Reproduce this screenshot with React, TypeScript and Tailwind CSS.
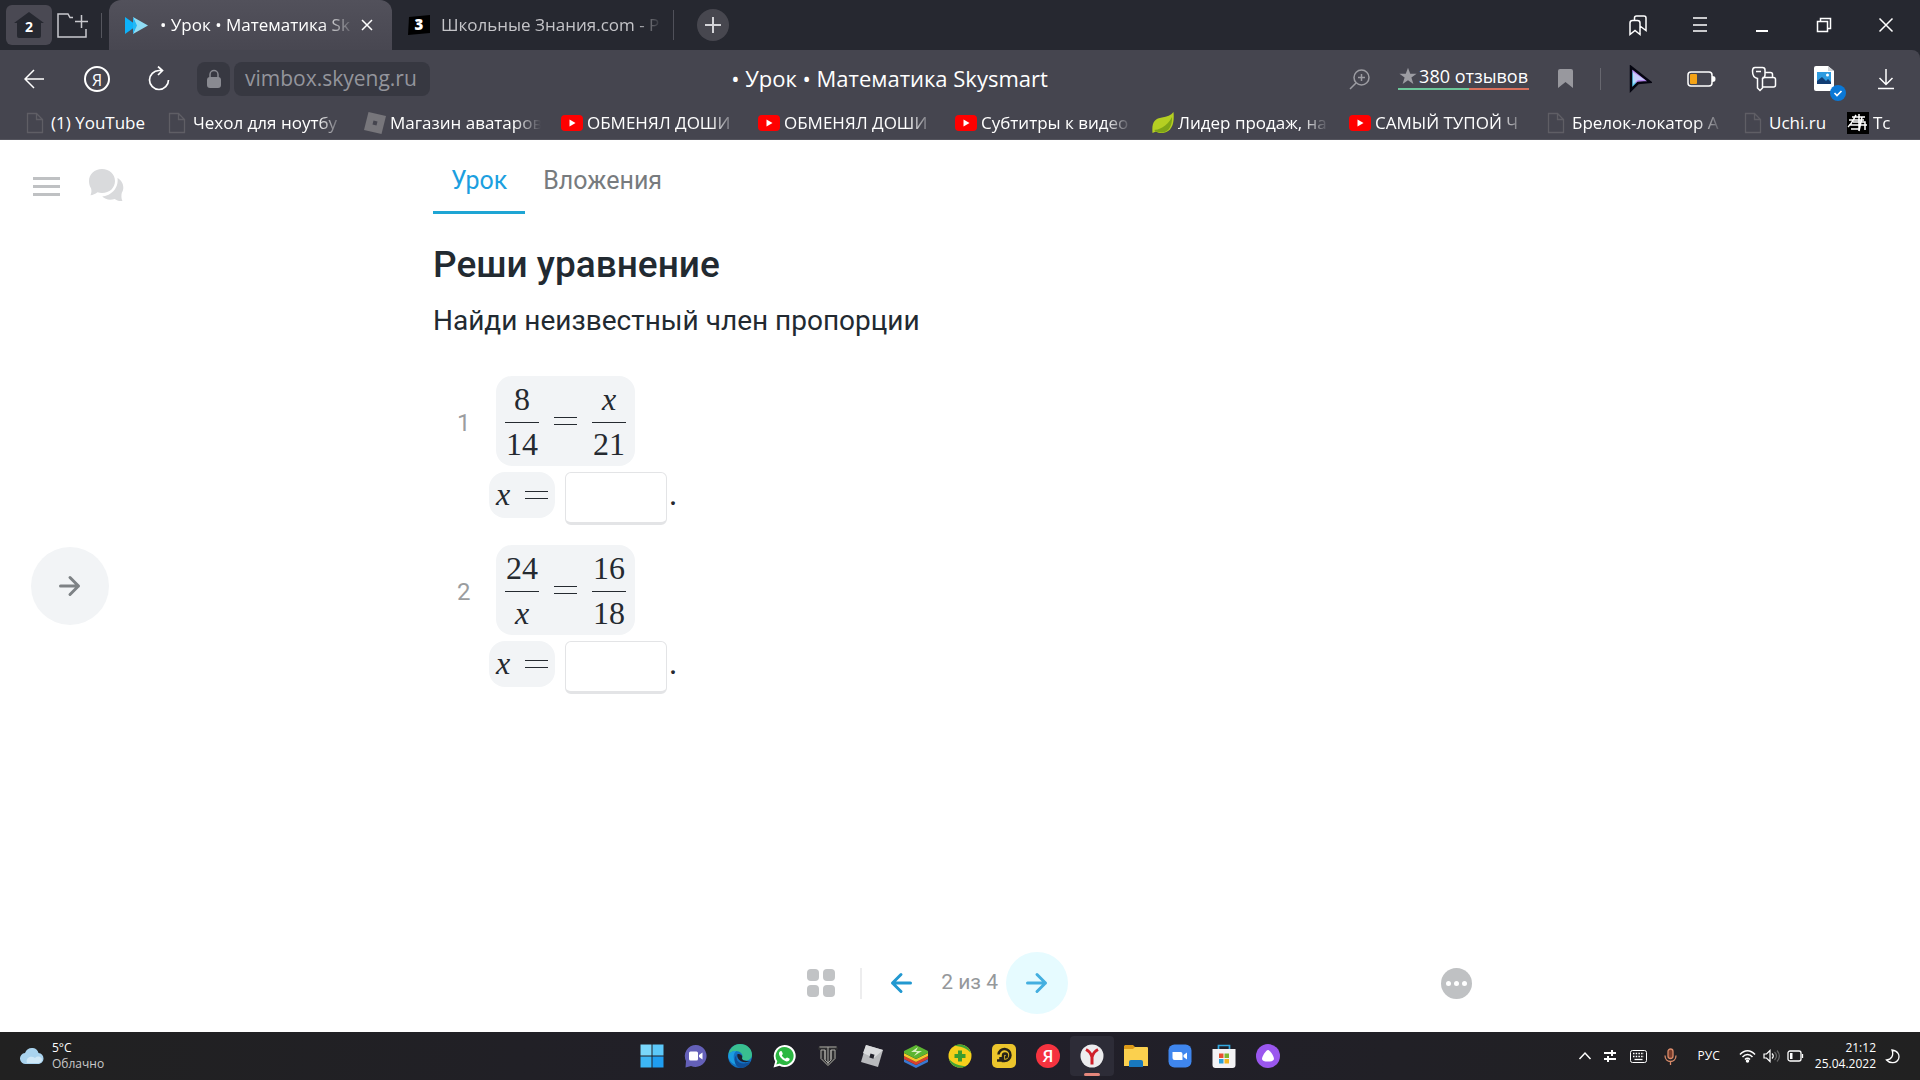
import { useState, type ReactNode } from "react";

type IconProps = { className?: string };

type Bookmark = {
  title: string;
  icon: "page" | "roblox" | "youtube" | "leaf" | "sketch";
  width: string;
};

type Term = { text: string; italic?: boolean };

type Equation = {
  id: number;
  left: [Term, Term];
  right: [Term, Term];
};

const bookmarks: Bookmark[] = [
  { title: "(1) YouTube", icon: "page", width: "w-[96px]" },
  { title: "Чехол для ноутбу", icon: "page", width: "w-[151px]" },
  { title: "Магазин аватаров", icon: "roblox", width: "w-[151px]" },
  { title: "ОБМЕНЯЛ ДОШИ", icon: "youtube", width: "w-[151px]" },
  { title: "ОБМЕНЯЛ ДОШИ", icon: "youtube", width: "w-[151px]" },
  { title: "Субтитры к видео", icon: "youtube", width: "w-[151px]" },
  { title: "Лидер продаж, на", icon: "leaf", width: "w-[151px]" },
  { title: "САМЫЙ ТУПОЙ Ч", icon: "youtube", width: "w-[151px]" },
  { title: "Брелок-локатор A", icon: "page", width: "w-[151px]" },
  { title: "Uchi.ru", icon: "page", width: "w-[58px]" },
  { title: "Tc", icon: "sketch", width: "w-[22px]" },
];

const equations: Equation[] = [
  {
    id: 1,
    left: [{ text: "8" }, { text: "14" }],
    right: [{ text: "x", italic: true }, { text: "21" }],
  },
  {
    id: 2,
    left: [{ text: "24" }, { text: "x", italic: true }],
    right: [{ text: "16" }, { text: "18" }],
  },
];

function Stroke({
  children,
  size,
  width = 1.5,
  className = "",
}: {
  children: ReactNode;
  size: number;
  width?: number;
  className?: string;
}) {
  return (
    <svg
      className={className}
      width={size}
      height={size}
      viewBox={`0 0 ${size} ${size}`}
      fill="none"
      stroke="currentColor"
      strokeWidth={width}
      aria-hidden="true"
    >
      {children}
    </svg>
  );
}

function BookmarkIcon({ icon }: { icon: Bookmark["icon"] }) {
  switch (icon) {
    case "page":
      return (
        <Stroke size={22} width={1.3} className="shrink-0 text-[#5f5e65]">
          <path d="M2.500 1.500h9l6 6v13h-15zM11.500 1.500v6h6" />
        </Stroke>
      );
    case "roblox":
      return (
        <svg className="shrink-0" width="22" height="22" viewBox="0 0 22 22">
          <path d="M4.500 0 22 4 17.500 22 0 18z" fill="#77767b" />
          <path d="m9.500 8.500 4 1-1 4-4-1z" fill="#45454f" />
        </svg>
      );
    case "youtube":
      return (
        <svg className="shrink-0" width="22" height="22" viewBox="0 0 22 22">
          <rect y="3" width="22" height="16" rx="4" fill="#f00" />
          <path d="m8.500 7.500 6 3.500-6 3.500z" fill="#fff" />
        </svg>
      );
    case "leaf":
      return (
        <svg className="shrink-0" width="22" height="22" viewBox="0 0 22 22">
          <path
            d="M21.500 0c1 9-.5 20-10.500 21-3 .3-5-.3-7-1.500L.500 21C-.5 10 3 6.500 10 5.500c5-.7 9-2 11.500-5.500z"
            fill="#b5cf22"
          />
          <path
            d="M2 18c4 0 13-3 18-13 .5 8-3 15-9.500 15.500C7 21 4 19.500 2 18z"
            fill="#7fa516"
          />
        </svg>
      );
    case "sketch":
      return (
        <svg className="shrink-0" width="22" height="22" viewBox="0 0 22 22">
          <rect width="22" height="22" fill="#000" />
          <path
            d="M2 8h15M2 13h18M9 3c-3 5-4 9-8 12M12 2v17M5 5h13M6 10h12v8M4 17h9M15 5l-3 14"
            stroke="#fff"
            strokeWidth="1.500"
            fill="none"
          />
        </svg>
      );
  }
}

function TabStrip() {
  return (
    <div className="flex h-[50px] items-center bg-[#262830]">
      <button
        aria-label="Табло"
        className="ml-[6px] grid h-10 w-[46px] shrink-0 place-items-center rounded-md bg-[#4a4953]"
        type="button"
      >
        <span className="relative grid place-items-center">
          <svg width="32" height="28" viewBox="0 0 32 28">
            <path
              d="M16 1 31 12h-3v13a2 2 0 0 1-2 2H6a2 2 0 0 1-2-2V12H1z"
              fill="#262830"
            />
          </svg>
          <span className="absolute pt-1 text-sm font-bold text-white">2</span>
        </span>
      </button>
      <button
        aria-label="Новая группа"
        className="ml-[5px] shrink-0 text-[#c9c9ce]"
        type="button"
      >
        <svg
          width="31"
          height="26"
          viewBox="0 0 31 26"
          fill="none"
          stroke="currentColor"
          strokeWidth="1.500"
        >
          <path d="M16 5.500h-3L11 2H1v23h28v-8M18 9.500h13M24.500 3v13" />
        </svg>
      </button>
      <span className="ml-[13px] h-[25px] w-px shrink-0 bg-[#55565e]" />
      <div className="ml-[7px] flex h-full w-[283px] shrink-0 items-center rounded-t-xl bg-linear-to-b from-[#52515b] to-[#484751] pl-4">
        <svg className="shrink-0" width="23" height="17" viewBox="0 0 23 17">
          <path d="M0 0 12 8.500 0 17z" fill="#0db2fa" />
          <path d="m8 0 15 8.500L8 17l3-8.500z" fill="#8fdcf4" />
          <path d="M8 0 12 8.500 8 17V0z" fill="#22b8f6" />
        </svg>
        <span className="ml-3 w-[196px] overflow-hidden text-[17px] whitespace-nowrap text-white [mask-image:linear-gradient(to_right,#000_82%,transparent)]">
          • Урок • Математика Sk
        </span>
        <button
          aria-label="Закрыть вкладку"
          className="ml-1 text-white"
          type="button"
        >
          <Stroke size={14}>
            <path d="m2 2 10 10M12 2 2 12" />
          </Stroke>
        </button>
      </div>
      <div className="flex h-full items-center pl-4">
        <svg className="shrink-0" width="22" height="20" viewBox="0 0 22 20">
          <path d="M1 2 22 0v18L0 20z" fill="#000" />
          <text
            x="11"
            y="15"
            textAnchor="middle"
            fontSize="15"
            fontWeight="800"
            fill="#fff"
          >
            3
          </text>
        </svg>
        <span className="ml-[11px] w-[221px] overflow-hidden text-[17px] whitespace-nowrap text-[#c4c4c8] [mask-image:linear-gradient(to_right,#000_88%,transparent)]">
          Школьные Знания.com - P
        </span>
      </div>
      <span className="ml-[11px] h-[30px] w-px shrink-0 bg-[#50515a]" />
      <button
        aria-label="Новая вкладка"
        className="ml-[23px] grid size-8 shrink-0 place-items-center rounded-full bg-[#47474f] text-[#d4d4d8]"
        type="button"
      >
        <Stroke size={18} width={2}>
          <path d="M9 1v16M1 9h16" />
        </Stroke>
      </button>
      <div className="ml-auto flex gap-[38px] pr-[22px] text-white">
        <button aria-label="Коллекции" type="button">
          <Stroke size={24}>
            <path d="M4 10c0-1.500 1-2.500 2.500-2.500h5C13 7.500 14 8.500 14 10v11.500l-5-4-5 4zM8.500 7.500V5c0-1.200.8-2 2-2H18c1.200 0 2 .8 2 2v12.500L14 13" />
          </Stroke>
        </button>
        <button aria-label="Меню" type="button">
          <Stroke size={24}>
            <path d="M5 5h14M5 12h14M5 18h14" />
          </Stroke>
        </button>
        <button aria-label="Свернуть" type="button">
          <Stroke size={24} width={2}>
            <path d="M6 18h12" />
          </Stroke>
        </button>
        <button aria-label="Развернуть" type="button">
          <Stroke size={24}>
            <path d="M5.500 8.500h10v10h-10zM8.500 8.500v-3h10v10h-3" />
          </Stroke>
        </button>
        <button aria-label="Закрыть" type="button">
          <Stroke size={24}>
            <path d="m5.500 5.500 13 13M18.500 5.500l-13 13" />
          </Stroke>
        </button>
      </div>
    </div>
  );
}

function Toolbar() {
  return (
    <div className="flex h-[57px] items-center rounded-tr-lg bg-[#45454f] pr-[22px] pl-6 text-white">
      <button aria-label="Назад" type="button">
        <Stroke size={20}>
          <path d="M20 10H1M10 1 1 10l9 9" />
        </Stroke>
      </button>
      <button
        aria-label="Яндекс"
        className="ml-10 grid size-[26px] place-items-center rounded-full border-2 border-white text-base"
        type="button"
      >
        Я
      </button>
      <button aria-label="Обновить" className="ml-9" type="button">
        <Stroke size={26} width={1.7}>
          <path d="M22.500 14a9.500 9.500 0 1 1-9.500-9.500h3M12 .500l4.500 4-4.500 4.500" />
        </Stroke>
      </button>
      <button
        aria-label="Защищённое соединение"
        className="ml-[25px] grid h-[34px] w-[33px] place-items-center rounded-lg bg-[#373841] text-[#898a91]"
        type="button"
      >
        <svg width="16" height="20" viewBox="0 0 16 20">
          <rect x="1" y="8" width="14" height="11" rx="3" fill="currentColor" />
          <path
            d="M4 9V5.500a4 4 0 0 1 8 0V9"
            fill="none"
            stroke="currentColor"
            strokeWidth="1.500"
          />
        </svg>
      </button>
      <a
        className="ml-1 flex h-[34px] w-[196px] items-center rounded-lg bg-[#373841] pl-[11px] text-[21px] text-[#94959c]"
        href="#lesson"
      >
        vimbox.skyeng.ru
      </a>
      <p className="flex-1 text-center text-[22px] whitespace-nowrap">
        • Урок • Математика Skysmart
      </p>
      <button aria-label="Масштаб" className="text-[#9c9ca2]" type="button">
        <Stroke size={22}>
          <circle cx="12.500" cy="9.500" r="7.500" />
          <path d="m7 15-6 6M12.500 6v7M9 9.500h7" />
        </Stroke>
      </button>
      <a className="ml-[27px] flex flex-col pb-[3px]" href="#reviews">
        <span className="flex items-center gap-0.5 px-px text-lg leading-6 whitespace-nowrap">
          <svg width="18" height="18" viewBox="0 0 24 24" fill="#9c9ca2">
            <path d="m12 1 3 8h8.500l-7 5 2.700 8.500L12 17.500l-7.200 5L7.500 14l-7-5H9z" />
          </svg>
          380 отзывов
        </span>
        <span className="flex h-[2px]">
          <span className="w-[54%] bg-[#6cc79a]" />
          <span className="flex-1 bg-[#d9705c]" />
        </span>
      </a>
      <button aria-label="В закладки" className="ml-[29px]" type="button">
        <svg width="15" height="19" viewBox="0 0 15 19" fill="#98989e">
          <path d="M2 0h11a2 2 0 0 1 2 2v17l-7.500-6L0 19V2a2 2 0 0 1 2-2z" />
        </svg>
      </button>
      <span className="ml-[27px] h-[22px] w-px bg-[#67676f]" />
      <button aria-label="Курсор" className="ml-[28px]" type="button">
        <svg width="23" height="28" viewBox="0 0 23 28">
          <path d="M2 2v23l7-7 12-1z" fill="#b88bf0" />
          <path d="M2 2v23l5-6z" fill="#5fc9f0" />
          <path
            d="M2 2v23l7-7 12-1z"
            fill="none"
            stroke="#050510"
            strokeWidth="2.500"
          />
          <path d="M4 7v12l5-4h7z" fill="#cfe8ff" opacity=".7" />
        </svg>
      </button>
      <button aria-label="Батарея" className="ml-[35px]" type="button">
        <svg width="29" height="16" viewBox="0 0 29 16">
          <rect
            x="1"
            y="1"
            width="24"
            height="14"
            rx="3"
            fill="none"
            stroke="#fff"
            strokeWidth="1.500"
          />
          <rect x="3" y="3" width="7" height="10" rx="1" fill="#f5a316" />
          <path d="M25 5c3 0 3.500 1 3.500 3S28 11 25 11z" fill="#fff" />
        </svg>
      </button>
      <button aria-label="Пароли" className="ml-[35px]" type="button">
        <Stroke size={26}>
          <path d="M4 1.500h7.500c1.500 0 2.500 1 2.500 2.500v5c0 2-1 3-2.500 3.500v9.500L9 24.500 6.500 22v-9.500C3.500 12 1.500 9 1.500 5c0-2 .5-3.500 2.500-3.500zM5 5.500h5" />
          <path d="M14 6.500h5.500c1.200 0 2 .8 2 2v3M11.500 11.500h11c1.200 0 2 .8 2 2v5.500c0 1.200-.8 2-2 2h-11" />
        </Stroke>
      </button>
      <button aria-label="Скриншоты" className="relative ml-[37px]" type="button">
        <svg width="20" height="25" viewBox="0 0 20 25">
          <path d="M2 0h12l6 5v18a2 2 0 0 1-2 2H2a2 2 0 0 1-2-2V2a2 2 0 0 1 2-2z" fill="#fff" />
          <path d="M3 6h14v12H3z" fill="#2d9be0" />
          <path d="m3 15 5-4 4 4 2-2 3 3v2H3z" fill="#123e74" />
          <circle cx="13.500" cy="9" r="1.500" fill="#fff" />
          <path d="M14 0v5h6z" fill="#cfd2d6" />
        </svg>
        <span className="absolute -right-3 -bottom-2.5 grid size-4 place-items-center rounded-full bg-[#0a78d6]">
          <Stroke size={10} width={1.7}>
            <path d="m1.500 5 2.500 2.500L8.500 3" />
          </Stroke>
        </span>
      </button>
      <button aria-label="Загрузки" className="ml-10" type="button">
        <Stroke size={24}>
          <path d="M12 2v15M5.500 11l6.500 6.500 6.500-6.500M4 21.500h16" />
        </Stroke>
      </button>
    </div>
  );
}

function BookmarksBar() {
  return (
    <nav className="flex h-[33px] items-center gap-5 overflow-hidden border-b border-[#55555e] bg-[#45454f] pl-[25px]">
      {bookmarks.map((bookmark, index) => (
        <a
          className="flex shrink-0 items-center gap-1 text-[17px] text-white"
          href="#bookmark"
          key={index}
        >
          <BookmarkIcon icon={bookmark.icon} />
          <span
            className={`overflow-hidden whitespace-nowrap ${bookmark.width} ${
              index === 0 || bookmark.title === "Uchi.ru"
                ? ""
                : "[mask-image:linear-gradient(to_right,#000_82%,transparent)]"
            }`}
          >
            {bookmark.title}
          </span>
        </a>
      ))}
    </nav>
  );
}

function EqualsSign() {
  return (
    <span className="flex w-[23px] flex-col gap-1.5">
      <span className="h-px bg-[#252a30]" />
      <span className="h-px bg-[#252a30]" />
    </span>
  );
}

function Fraction({ terms }: { terms: [Term, Term] }) {
  const [top, bottom] = terms;

  return (
    <span className="flex w-[34px] flex-col items-center">
      <span
        className={`flex h-[46px] w-full items-center justify-center border-b border-[#252a30] ${
          top.italic ? "italic" : ""
        }`}
      >
        {top.text}
      </span>
      <span
        className={`flex h-[43px] items-center ${bottom.italic ? "italic" : ""}`}
      >
        {bottom.text}
      </span>
    </span>
  );
}

function EquationRow({ equation }: { equation: Equation }) {
  const [answer, setAnswer] = useState("");

  return (
    <li className="flex items-start">
      <span className="w-[56px] pt-[33px] pl-6 text-2xl leading-7 text-[#9b9d9f]">
        {equation.id}
      </span>
      <div className="font-['Liberation_Serif',serif] text-[32px] leading-10 text-[#252a30]">
        <div className="ml-[7px] flex h-[90px] w-fit items-center gap-[15px] rounded-2xl bg-[#f2f4f6] px-[9px]">
          <Fraction terms={equation.left} />
          <EqualsSign />
          <Fraction terms={equation.right} />
        </div>
        <div className="mt-1.5 flex items-start">
          <label
            className="flex h-[46px] items-center gap-3 rounded-2xl bg-[#f2f4f6] px-[7px]"
            htmlFor={`answer-${equation.id}`}
          >
            <span className="w-[17px] pb-0.5 italic">x</span>
            <EqualsSign />
          </label>
          <input
            className="ml-2.5 h-[53px] w-[102px] rounded-md border border-b-3 border-[#e3e4e6] bg-white px-3 text-2xl outline-none"
            id={`answer-${equation.id}`}
            onChange={(event) => setAnswer(event.target.value)}
            type="text"
            value={answer}
          />
          <span className="pt-0.5 pl-0.5">.</span>
        </div>
      </div>
    </li>
  );
}

function Arrow({ left, className }: IconProps & { left?: boolean }) {
  return (
    <Stroke size={22} width={3} className={className}>
      <path
        d={
          left
            ? "M20.500 11H2.500M11 2.500 2.500 11l8.500 8.500"
            : "M1.500 11h18M11 2.500l8.500 8.500-8.500 8.500"
        }
        strokeLinecap="round"
        strokeLinejoin="round"
      />
    </Stroke>
  );
}

function Lesson() {
  return (
    <main className="grid flex-1 grid-cols-[1fr_minmax(0,1054px)_1fr] bg-white font-[Roboto,sans-serif]">
      <aside className="grid grid-rows-[1fr_auto_1fr]">
        <div className="flex items-start gap-[29px] pt-[29px] pl-[33px]">
          <button
            aria-label="Меню урока"
            className="flex w-[27px] flex-col gap-[5px] pt-2"
            type="button"
          >
            <span className="h-[3px] bg-[#bfc1c3]" />
            <span className="h-[3px] bg-[#bfc1c3]" />
            <span className="h-[3px] bg-[#bfc1c3]" />
          </button>
          <button aria-label="Чат" type="button">
            <svg width="35" height="33" viewBox="0 0 35 33" fill="#d9dadc">
              <path d="M13 0c7.500 0 13 5 13 12s-5.500 12-13 12c-1.600 0-3-.2-4.500-.8C6 25 4 26 1.500 26.300c1-2.300 1.300-4.500.5-7C.7 17.200 0 15 0 12 0 5 5.500 0 13 0z" />
              <path d="M28.500 9C32 11 34.300 14.500 34.300 18.500c0 2-.5 3.700-1.500 5.200-.6 2.800-.6 5.500.6 8.300-3.200.4-5.700-.5-7.700-2-5 1.500-9.500.5-12.500-2.500C21 27 30 20 28.500 9z" />
            </svg>
          </button>
        </div>
        <button
          aria-label="Показать панель"
          className="ml-[31px] grid size-[78px] place-items-center rounded-full bg-[#f2f4f6] text-[#7e8285]"
          type="button"
        >
          <Arrow />
        </button>
      </aside>
      <div className="flex flex-col">
        <nav className="flex h-[74px] text-[25px] leading-8">
          <a
            className="border-b-3 border-[#1ea5d4] px-[18px] pt-[25px] text-[#1c9fe0]"
            href="#lesson"
          >
            Урок
          </a>
          <a className="px-[18px] pt-[25px] text-[#777b7e]" href="#files">
            Вложения
          </a>
        </nav>
        <h1 className="mt-7 text-[37px] leading-[46px] font-medium text-[#222a31]">
          Реши уравнение
        </h1>
        <p className="mt-[15px] text-[28px] leading-9 text-[#222a31]">
          Найди неизвестный член пропорции
        </p>
        <ol className="mt-[37px] flex flex-col gap-5">
          {equations.map((equation) => (
            <EquationRow equation={equation} key={equation.id} />
          ))}
        </ol>
        <footer className="mt-auto flex items-center pb-[18px]">
          <div className="flex-1" />
          <div className="flex items-center pr-[30px]">
            <button
              aria-label="Все слайды"
              className="grid grid-cols-2 gap-1"
              type="button"
            >
              <span className="size-3 rounded bg-[#c1c3c5]" />
              <span className="size-3 rounded bg-[#c1c3c5]" />
              <span className="size-3 rounded bg-[#c1c3c5]" />
              <span className="size-3 rounded bg-[#c1c3c5]" />
            </button>
            <span className="ml-[25px] h-[31px] w-[2px] bg-[#ededee]" />
            <button aria-label="Предыдущий слайд" className="ml-7" type="button">
              <Arrow left className="text-[#2298d0]" />
            </button>
            <span className="w-[94px] pr-2 text-right text-[21px] whitespace-nowrap text-[#95989b]">
              2 из 4
            </span>
            <button
              aria-label="Следующий слайд"
              className="grid size-[62px] place-items-center rounded-full bg-[#e6fbff]"
              type="button"
            >
              <Arrow className="text-[#44afe0]" />
            </button>
          </div>
          <div className="flex flex-1 justify-end pr-[15px]">
            <button
              aria-label="Ещё"
              className="flex size-[31px] items-center justify-center gap-[3px] rounded-full bg-[#bfc1c3]"
              type="button"
            >
              <span className="size-[5px] rounded-full bg-white" />
              <span className="size-[5px] rounded-full bg-white" />
              <span className="size-[5px] rounded-full bg-white" />
            </button>
          </div>
        </footer>
      </div>
    </main>
  );
}

// Every taskbar drawing lives on a 24px grid
const apps: { name: string; art: ReactNode }[] = [
  {
    name: "Пуск",
    art: (
      <>
        <path d="M.500 .500h11v11H.500z" fill="#7ad7fb" />
        <path d="M12.500 .500h11v11h-11z" fill="#5cc8f9" />
        <path d="M.500 12.500h11v11H.500z" fill="#3db6f5" />
        <path d="M12.500 12.500h11v11h-11z" fill="#1f9df0" />
      </>
    ),
  },
  {
    name: "Чат",
    art: (
      <>
        <path d="M12 1a11 11 0 1 1-5 21l-5.500 1.500L2 17A11 11 0 0 1 12 1z" fill="#6460b8" />
        <rect x="5" y="7.500" width="9" height="9" rx="1.500" fill="#fff" />
        <path d="m15 11 3.500-2.500v7L15 13z" fill="#fff" />
      </>
    ),
  },
  {
    name: "Edge",
    art: (
      <>
        <circle cx="12" cy="12" r="12" fill="#1272c4" />
        <path d="M.500 11C1 4.500 6 0 12 0c7 0 12 5 12 10.500 0 4-3 6-6.500 6-3 0-4-1.300-3.500-2.500C16 10.500 12 7 8 7c-4 0-6.500 2-7.500 4z" fill="#39bf8f" />
        <path d="M.300 11.500C1.500 8 5 6.500 8.500 7 5 9 4 16 10 21c-6-.5-10-5-9.700-9.500z" fill="#1b9de0" />
        <path d="M9 10c-2 5 1 9.500 6.500 9.500 3 0 5-.7 7-2C20 22 16 24 12 24 6 22 5 14 9 10z" fill="#0f4f98" />
        <path d="M9.500 10c-1 3 1 7 6 8 3 .5 5-.3 6.500-1-1 .3-8 .5-8-3 .8-1.500 0-4-4.500-4z" fill="#1e1f2b" />
      </>
    ),
  },
  {
    name: "WhatsApp",
    art: (
      <>
        <path d="M12.500 1a11 11 0 1 1-5 20.700L1.500 23.500l1.700-6A11 11 0 0 1 12.500 1z" fill="#fff" />
        <path d="M12.500 3a9 9 0 1 1-4.700 16.600l-3.500 1 1-3.400A9 9 0 0 1 12.500 3z" fill="#2cb742" />
        <path d="M9 7c.6 0 .8.200 1 .7l.8 2c.1.500-.9 1.300-.9 1.700 0 .7 2.500 3 3.400 3.200.5.100 1.300-1.300 1.800-1.200l2.200 1.100c.5.300.4.700.2 1.300-.4 1-1.700 1.700-2.800 1.600C11 16.700 7 12.500 7 9.500 7 8.300 8 7 9 7z" fill="#fff" />
      </>
    ),
  },
  {
    name: "World of Tanks",
    art: (
      <>
        <path d="M3 2h18l1 3-2 1.500V15l-8 7.500L4 15V6.500L2 5z" fill="#2e2e30" />
        <path d="M3.500 3h17M5 6h4v9.500M15 15.500V6h4v8.500M12 3v17M9 6v10l3 3 3-3V6M5 6v8.500l7 7 7-7" stroke="#aaa9a4" strokeWidth="1" fill="none" />
      </>
    ),
  },
  {
    name: "Roblox",
    art: (
      <>
        <path d="m6 1 17 5-5 17-17-5z" fill="#b9babd" />
        <path d="m6 1 17 5-9 8-11-5z" fill="#dadbdd" />
        <path d="m10.500 9.500 4 1.200-1.100 4-4-1.200z" fill="#23222c" />
      </>
    ),
  },
  {
    name: "BlueStacks",
    art: (
      <>
        <path d="m0 15 12 6 12-6v3l-12 6-12-6z" fill="#3a78cf" />
        <path d="m0 12 12 6 12-6v3l-12 6-12-6z" fill="#d9402f" />
        <path d="m0 9 12 6 12-6v3l-12 6-12-6z" fill="#f5c728" />
        <path d="M0 7 12 1l12 6v2l-12 6L0 9z" fill="#5cb531" />
        <path d="m14 3-7 5h6l-3 4 8-5h-6z" fill="#d9f0c0" />
      </>
    ),
  },
  {
    name: "360",
    art: (
      <>
        <circle cx="12" cy="12" r="11.500" fill="#f6cf1b" />
        <path d="M6 2c6-3.500 15-1 17 7-4-4.500-10-7-17-7zM18 22C12 25.500 3 23 1 15c4 4.500 10 7 17 7z" fill="#42a436" />
        <path d="M10 6.500h4V10h3.500v4H14v3.500h-4V14H6.500v-4H10z" fill="#3c9c2e" />
      </>
    ),
  },
  {
    name: "LDPlayer",
    art: (
      <>
        <rect width="24" height="24" rx="5" fill="#ecc52c" />
        <path d="M6.500 10.500a6 6 0 1 1 6 6.500H11v-5.500a2 2 0 1 1 2 2M8.500 13v3.500H5" stroke="#272318" strokeWidth="2.500" fill="none" />
      </>
    ),
  },
  {
    name: "Яндекс",
    art: (
      <>
        <circle cx="12" cy="12" r="12" fill="#f5333f" />
        <text x="12" y="18" textAnchor="middle" fontSize="17" fontWeight="600" fill="#fff">
          Я
        </text>
      </>
    ),
  },
  {
    name: "Браузер",
    art: (
      <>
        <circle cx="12" cy="12" r="11.500" fill="#ececee" />
        <path d="M6 5.500c3 1.500 5 4 6 7.500 1-3.500 3-6 6-7.500M12 12.500v8" stroke="#d0202a" strokeWidth="3" fill="none" />
      </>
    ),
  },
  {
    name: "Проводник",
    art: (
      <>
        <path d="M1 1h8l2 2v4H0V2z" fill="#dc9a18" />
        <path d="M0 5h9l2-2h12a1 1 0 0 1 1 1v18H0z" fill="#fbd04e" />
        <path d="M5 23v-5a2 2 0 0 1 2-2h10a2 2 0 0 1 2 2v5z" fill="#1878bd" />
      </>
    ),
  },
  {
    name: "Zoom",
    art: (
      <>
        <rect x=".500" y=".500" width="23" height="23" rx="6" fill="#3f86ee" />
        <path d="M4.500 8h8a2 2 0 0 1 2 2v6h-8a2 2 0 0 1-2-2zM15.500 11l3.500-2.500v7L15.500 13z" fill="#fff" />
      </>
    ),
  },
  {
    name: "Microsoft Store",
    art: (
      <>
        <path d="M6.500 6V1.500h11V6" stroke="#33a8df" strokeWidth="1.700" fill="none" />
        <path d="M.500 5h23v16a3 3 0 0 1-3 3h-17a3 3 0 0 1-3-3z" fill="#f3f3f5" />
        <path d="M7 9.500h4.500V14H7z" fill="#e8502e" />
        <path d="M12.500 9.500H17V14h-4.500z" fill="#7db72f" />
        <path d="M7 15h4.500v4.500H7z" fill="#2ba0da" />
        <path d="M12.500 15H17v4.500h-4.500z" fill="#f3b520" />
      </>
    ),
  },
  {
    name: "Алиса",
    art: (
      <>
        <circle cx="12" cy="12" r="12" fill="#9a57ee" />
        <path d="M12 6c2 0 6 6.500 6 8.700 0 2-2.500 2.800-6 2.800s-6-.8-6-2.800C6 12.500 10 6 12 6z" fill="#fff" />
      </>
    ),
  },
];

function Taskbar() {
  return (
    <footer className="grid h-12 grid-cols-[1fr_auto_1fr] items-center bg-linear-to-r from-[#212121] via-[#211f2a] to-[#212121] text-xs text-white">
      <div className="flex items-center gap-2 pl-5">
        <svg width="24" height="18" viewBox="0 0 24 18">
          <path d="M6 17a5.500 5.500 0 0 1-1-11C6.500 2 9.500.500 13 1c3 .4 5 2.400 5.500 5 3 .3 5 2.500 5 5.500S21 17 18 17z" fill="#a9d3ee" />
          <path d="M7 16c-2-5 4-8 8-5 3-3 7-1 7 1.500S20 16 18 16z" fill="#cfe8f7" />
        </svg>
        <div>
          <p>5°C</p>
          <p className="text-[#c9c9c9]">Облачно</p>
        </div>
      </div>
      <div className="flex">
        {apps.map((app) => (
          <button
            aria-label={app.name}
            className={`relative grid h-10 w-11 place-items-center rounded ${
              app.name === "Браузер" ? "bg-[#2d2c37]" : ""
            }`}
            key={app.name}
            type="button"
          >
            <svg width="24" height="24" viewBox="0 0 24 24">
              {app.art}
            </svg>
            {app.name === "Браузер" && (
              <span className="absolute bottom-0 h-[3px] w-4 rounded-full bg-[#e5877c]" />
            )}
          </button>
        ))}
      </div>
      <div className="flex items-center justify-end pr-5">
        <Stroke size={14}>
          <path d="m1.500 10 5.500-6 5.500 6" />
        </Stroke>
        <Stroke size={14} width={2} className="ml-[11px]">
          <path d="M1 4h12M1 10h12M9 1v6M5 7v6" />
        </Stroke>
        <svg className="ml-[13px]" width="17" height="13" viewBox="0 0 17 13" fill="none" stroke="#fff">
          <rect x=".500" y=".500" width="16" height="12" rx="2" />
          <path d="M3 3.500h11M3 6.500h11" strokeDasharray="1.500 1.200" strokeWidth="1.300" />
          <path d="M4.500 9.500h8" strokeWidth="1.300" />
        </svg>
        <svg className="ml-[17px]" width="13" height="17" viewBox="0 0 13 17" fill="none" stroke="#d98b6a" strokeWidth="1.300">
          <rect x="4" y="1" width="5" height="9.500" rx="2.500" fill="#7a3d2b" />
          <path d="M1 7.500c0 8 11 8 11 0M6.500 13.500V17" />
        </svg>
        <span className="ml-[21px]">РУС</span>
        <svg className="ml-[19px]" width="17" height="14" viewBox="0 0 17 14" fill="none" stroke="#fff" strokeWidth="1.500">
          <path d="M1 5.500c4.500-5 10.500-5 15 0M3.500 8c3-3.300 7-3.300 10 0M6 10.500c1.500-1.600 3.500-1.600 5 0" />
          <circle cx="8.500" cy="12" r="1" fill="#fff" />
        </svg>
        <svg className="ml-[7px]" width="17" height="14" viewBox="0 0 17 14" fill="none" stroke="#fff" strokeWidth="1.200">
          <path d="M1 5h2.500L7 1.500v11L3.500 9H1zM9 4.500c1.500 1.500 1.500 3.500 0 5" />
          <path d="M11.500 3c2.500 2.500 2.500 5.500 0 8M14 1.500c3 3.500 3 7.500 0 11" stroke="#666" />
        </svg>
        <svg className="ml-[7px]" width="17" height="12" viewBox="0 0 17 12" fill="none" stroke="#fff" strokeWidth="1.300">
          <rect x="1" y="1" width="13" height="10" rx="2" />
          <path d="M3 3h2.500v6H3z" fill="#fff" stroke="none" />
          <path d="M15.500 4v4" />
        </svg>
        <div className="ml-[11px] text-right">
          <p>21:12</p>
          <p>25.04.2022</p>
        </div>
        <Stroke size={15} width={1.3} className="ml-[9px]">
          <path d="M7 1c6 1 8 5 6.500 9-2 4.500-8.500 5-12 1C6.500 10.500 9 6.500 7 1z" />
        </Stroke>
      </div>
    </footer>
  );
}

export default function App() {
  return (
    <div className="flex min-h-screen flex-col font-['Open_Sans',sans-serif]">
      <header className="bg-[#262830]">
        <TabStrip />
        <Toolbar />
        <BookmarksBar />
      </header>
      <Lesson />
      <Taskbar />
    </div>
  );
}
